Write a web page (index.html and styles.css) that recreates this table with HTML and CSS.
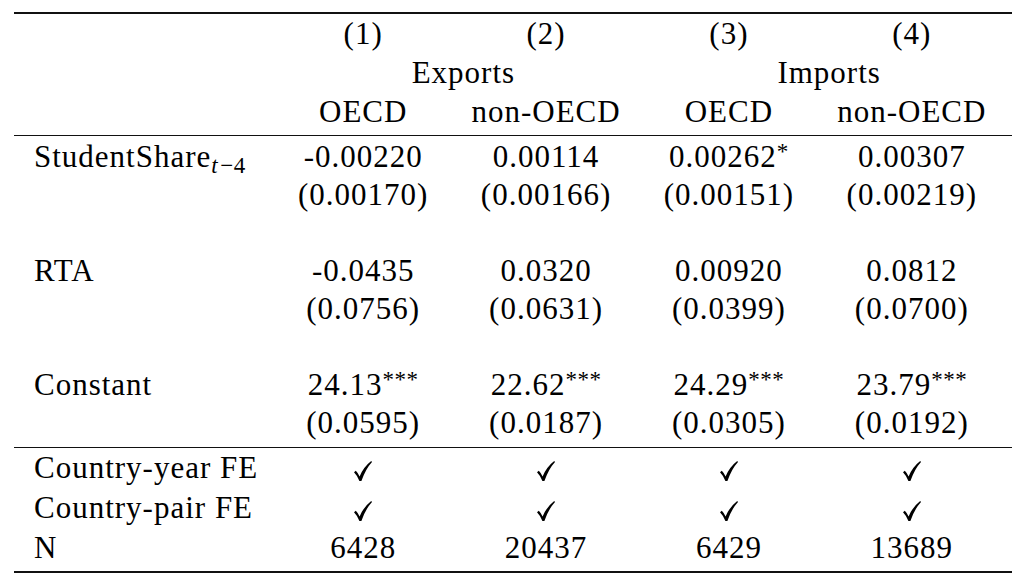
FILE: index.html
```html
<!DOCTYPE html>
<html lang="en">
<head>
<meta charset="utf-8">
<title>Regression table</title>
<link rel="stylesheet" href="styles.css">
</head>
<body>
<div class="page">
  <table class="reg">
    <colgroup>
      <col class="c-label">
      <col class="c-narrow">
      <col class="c-wide">
      <col class="c-narrow">
      <col class="c-wide">
    </colgroup>
    <thead>
      <tr class="hrow">
        <th></th><th>(1)</th><th>(2)</th><th>(3)</th><th>(4)</th>
      </tr>
      <tr class="hrow">
        <th></th><th colspan="2">Exports</th><th colspan="2">Imports</th>
      </tr>
      <tr class="hrow last">
        <th></th><th>OECD</th><th>non-OECD</th><th>OECD</th><th>non-OECD</th>
      </tr>
    </thead>
    <tbody class="coefs">
      <tr class="first">
        <td class="label">StudentShare<span class="sub"><i>t</i>−4</span></td>
        <td>-0.00220</td><td>0.00114</td><td>0.00262<span class="sup">*</span></td><td>0.00307</td>
      </tr>
      <tr>
        <td></td><td>(0.00170)</td><td>(0.00166)</td><td>(0.00151)</td><td>(0.00219)</td>
      </tr>
      <tr><td></td><td></td><td></td><td></td><td></td></tr>
      <tr>
        <td class="label">RTA</td>
        <td>-0.0435</td><td>0.0320</td><td>0.00920</td><td>0.0812</td>
      </tr>
      <tr>
        <td></td><td>(0.0756)</td><td>(0.0631)</td><td>(0.0399)</td><td>(0.0700)</td>
      </tr>
      <tr><td></td><td></td><td></td><td></td><td></td></tr>
      <tr>
        <td class="label">Constant</td>
        <td>24.13<span class="sup">***</span></td><td>22.62<span class="sup">***</span></td><td>24.29<span class="sup">***</span></td><td>23.79<span class="sup">***</span></td>
      </tr>
      <tr class="lastc">
        <td></td><td>(0.0595)</td><td>(0.0187)</td><td>(0.0305)</td><td>(0.0192)</td>
      </tr>
    </tbody>
    <tbody class="stats">
      <tr class="first">
        <td class="label">Country-year FE</td>
        <td><svg class="check" viewBox="0 0 18 20" aria-hidden="true"><path d="M0,11.2 L1.8,9.8 Q4,12 5.6,15.4 Q9.5,6 17.2,0 L18,0.9 Q11.5,8 7.4,20 L5.4,20 Q3.4,14.6 0,11.2 Z"/></svg></td>
        <td><svg class="check" viewBox="0 0 18 20" aria-hidden="true"><path d="M0,11.2 L1.8,9.8 Q4,12 5.6,15.4 Q9.5,6 17.2,0 L18,0.9 Q11.5,8 7.4,20 L5.4,20 Q3.4,14.6 0,11.2 Z"/></svg></td>
        <td><svg class="check" viewBox="0 0 18 20" aria-hidden="true"><path d="M0,11.2 L1.8,9.8 Q4,12 5.6,15.4 Q9.5,6 17.2,0 L18,0.9 Q11.5,8 7.4,20 L5.4,20 Q3.4,14.6 0,11.2 Z"/></svg></td>
        <td><svg class="check" viewBox="0 0 18 20" aria-hidden="true"><path d="M0,11.2 L1.8,9.8 Q4,12 5.6,15.4 Q9.5,6 17.2,0 L18,0.9 Q11.5,8 7.4,20 L5.4,20 Q3.4,14.6 0,11.2 Z"/></svg></td>
      </tr>
      <tr>
        <td class="label">Country-pair FE</td>
        <td><svg class="check" viewBox="0 0 18 20" aria-hidden="true"><path d="M0,11.2 L1.8,9.8 Q4,12 5.6,15.4 Q9.5,6 17.2,0 L18,0.9 Q11.5,8 7.4,20 L5.4,20 Q3.4,14.6 0,11.2 Z"/></svg></td>
        <td><svg class="check" viewBox="0 0 18 20" aria-hidden="true"><path d="M0,11.2 L1.8,9.8 Q4,12 5.6,15.4 Q9.5,6 17.2,0 L18,0.9 Q11.5,8 7.4,20 L5.4,20 Q3.4,14.6 0,11.2 Z"/></svg></td>
        <td><svg class="check" viewBox="0 0 18 20" aria-hidden="true"><path d="M0,11.2 L1.8,9.8 Q4,12 5.6,15.4 Q9.5,6 17.2,0 L18,0.9 Q11.5,8 7.4,20 L5.4,20 Q3.4,14.6 0,11.2 Z"/></svg></td>
        <td><svg class="check" viewBox="0 0 18 20" aria-hidden="true"><path d="M0,11.2 L1.8,9.8 Q4,12 5.6,15.4 Q9.5,6 17.2,0 L18,0.9 Q11.5,8 7.4,20 L5.4,20 Q3.4,14.6 0,11.2 Z"/></svg></td>
      </tr>
      <tr class="lastc">
        <td class="label">N</td>
        <td>6428</td><td>20437</td><td>6429</td><td>13689</td>
      </tr>
    </tbody>
  </table>
</div>
</body>
</html>
```

FILE: styles.css
```css
html, body {
  margin: 0;
  padding: 0;
  background: #ffffff;
}

.page {
  padding: 12px 12px 0 14px;
}

.reg {
  width: 998px;
  border-collapse: collapse;
  table-layout: fixed;
  font-family: "Liberation Serif", "Times New Roman", serif;
  font-size: 31px;
  letter-spacing: 1px;
  color: #000000;
}

.c-label { width: 266px; }
.c-narrow { width: 165px; }
.c-wide { width: 200px; }

.reg th,
.reg td {
  padding: 0;
  font-weight: normal;
  text-align: center;
  white-space: nowrap;
  vertical-align: middle;
}

.reg td.label {
  text-align: left;
  padding-left: 20px;
}

.reg thead {
  border-top: 2px solid #111111;
}

.hrow th {
  height: 39px;
  line-height: 39px;
}

.hrow.last th {
  padding-bottom: 4px;
}

.coefs {
  border-top: 1px solid #111111;
}

.coefs td {
  height: 38px;
  line-height: 38px;
}

.coefs tr.first td {
  padding-top: 2px;
}

.coefs tr.lastc td {
  padding-bottom: 5px;
}

.stats {
  border-top: 1px solid #111111;
  border-bottom: 2px solid #111111;
}

.stats td {
  height: 40px;
  line-height: 40px;
}

.stats tr.lastc td {
  padding-bottom: 3px;
}

.sub {
  font-size: 23px;
  letter-spacing: 0.5px;
  vertical-align: -6px;
  line-height: 0;
}

.sub i {
  padding-right: 2px;
}

.sup {
  font-size: 23px;
  letter-spacing: 0.5px;
  vertical-align: 8px;
  line-height: 0;
}

.check {
  width: 18px;
  height: 20px;
  fill: #000000;
  vertical-align: -3px;
}
```
